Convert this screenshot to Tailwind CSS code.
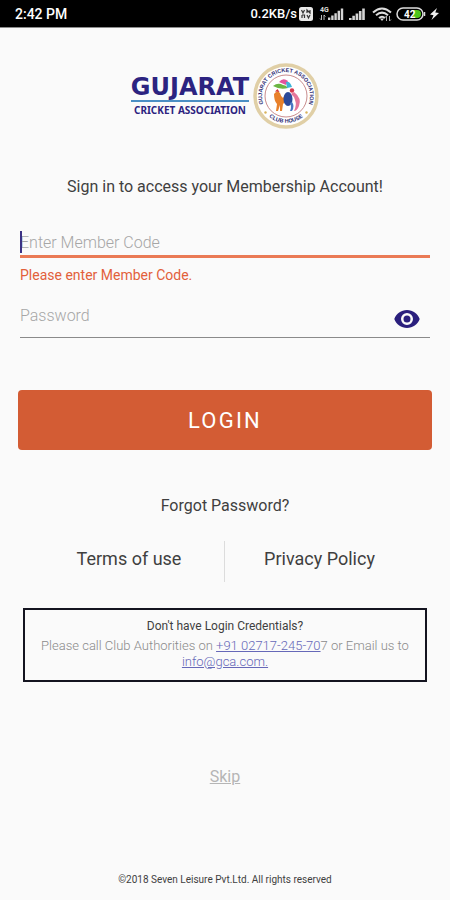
<!doctype html>
<html lang="en">
  <head>
    <meta charset="UTF-8" />
    <meta name="viewport" content="width=device-width, initial-scale=1.0" />
    <title>Gujarat Cricket Association - Login</title>
    <script src="https://cdn.jsdelivr.net/npm/@tailwindcss/browser@4"></script>
  </head>
  <body
    class="flex min-h-screen flex-col bg-[#fafafa] font-['Roboto',sans-serif] text-[#3f3f3f]"
  >
    <!-- Status bar -->
    <div
      class="flex h-7 items-center justify-between border-b border-[#8c8c8c] bg-black pr-[11px] pl-[15px] text-white"
    >
      <span class="text-sm font-medium">2:42 PM</span>
      <div class="flex items-center">
        <span class="text-[13px] font-medium">0.2KB/s</span>
        <svg class="ml-0.5 h-[14px] w-[14px]" viewBox="0 0 14 14">
          <rect width="14" height="14" rx="2.5" fill="#e8e8e8" />
          <path
            d="M2.5 3l1.5 3L5.500 3M8 6V3l3 3V3M3 8v3M3 8h2.500v3M8 8l1.500 3L11 8"
            fill="none"
            stroke="#333"
            stroke-width="1.200"
          />
        </svg>
        <svg class="ml-1.5 h-4 w-[25px]" viewBox="0 0 25 16">
          <text
            x="1"
            y="6"
            font-family="Roboto"
            font-size="7"
            font-weight="700"
            fill="#ddd"
          >4G</text>
          <path
            d="M2.500 9v5M1 12.500L2.500 14M5 14V9M5 9l1.500 1.500"
            stroke="#bbb"
            fill="none"
          />
          <path
            d="M9 11.500h2.400V14H9zM12.200 9.500h2.400V14h-2.400zM15.400 7.200h2.400V14h-2.400zM18.600 4.800H21V14h-2.400zM21.800 2.500h2.400V14h-2.400z"
            fill="#d5d5d5"
          />
        </svg>
        <svg class="ml-1 h-4 w-[18px]" viewBox="0 0 18 16">
          <path
            d="M1 12h2.600v2H1zM4.300 9.800h2.600V14H4.300zM7.600 7.400h2.600V14H7.600zM10.900 5h2.600v9h-2.600zM14.200 2.500h2.600V14h-2.600z"
            fill="#d5d5d5"
          />
        </svg>
        <svg class="ml-1.5 h-4 w-5" viewBox="0 0 20 16">
          <g fill="none" stroke="#ddd" stroke-width="2">
            <path d="M1 6.500Q10-1.500 19 6.500" />
            <path d="M4 9.200Q10 4 16 9.200" />
            <path d="M7 12q3-2.500 6 0" />
          </g>
          <path d="M8 12.500h4l-2 2.500z" fill="#ddd" />
          <path
            d="M14.500 15v-5M13 11.500l1.500-1.500M17.500 10v5l1.500-1.500"
            stroke="#aaa"
            fill="none"
          />
        </svg>
        <svg class="ml-1 h-4 w-[30px]" viewBox="0 0 30 16">
          <rect
            x="1"
            y="2"
            width="26"
            height="12"
            rx="6"
            fill="none"
            stroke="#ddd"
            stroke-width="1.500"
          />
          <path d="M17 4h4a4 4 0 0 1 0 8h-4z" fill="#4ec51c" />
          <path d="M28.500 6v4" stroke="#ddd" stroke-width="1.500" />
          <text
            x="8"
            y="11.500"
            font-family="Roboto"
            font-size="10"
            font-weight="700"
            fill="#fff"
          >42</text>
        </svg>
        <svg class="ml-1 h-3 w-[9px]" viewBox="0 0 9 12">
          <path d="M7 0L0 6.500l3.500.7L1.500 12 9 5 5.300 4.400z" fill="#eee" />
        </svg>
      </div>
    </div>

    <main class="flex grow flex-col">
      <!-- Logo -->
      <header class="mt-[35px] flex items-center justify-center gap-1">
        <div class="flex flex-col text-[#2c2380]">
          <span
            class="border-b-2 border-[#4b8fc4] font-['DejaVu_Sans',sans-serif] text-2xl leading-[26px] font-bold"
            >GUJARAT</span
          >
          <span
            class="text-center font-['Noto_Sans',sans-serif] text-[10px] leading-4 font-bold"
            >CRICKET ASSOCIATION</span
          >
        </div>
        <svg class="h-[66px] w-[66px]" viewBox="0 0 66 66">
          <defs>
            <path id="ringTop" d="M12.200 45A24 24 0 1 1 53.800 45" />
            <path id="ringBottom" d="M14 52A27 27 0 0 0 52 52" />
          </defs>
          <circle
            cx="33"
            cy="33"
            r="31"
            fill="#fff"
            stroke="#e0cfa6"
            stroke-width="3.500"
          />
          <circle
            cx="33"
            cy="33"
            r="21"
            fill="#fff"
            stroke="#c98c8c"
            stroke-width="1"
          />
          <g
            font-family="Liberation Sans"
            font-weight="700"
            fill="#2c2a72"
            text-anchor="middle"
          >
            <text font-size="5.500">
              <textPath href="#ringTop" startOffset="50%">GUJARAT CRICKET ASSOCIATION</textPath>
            </text>
            <text font-size="5.500">
              <textPath href="#ringBottom" startOffset="50%">CLUB HOUSE</textPath>
            </text>
          </g>
          <circle cx="12.500" cy="49.500" r="1.200" fill="#d9b45c" />
          <circle cx="53.500" cy="49.500" r="1.200" fill="#d9b45c" />
          <path d="M20 23q5-4 10-1 3 0 5 3-8 2-15-2z" fill="#6cb543" />
          <path d="M26 19q4-5 9-1l-2 4z" fill="#e3549c" />
          <path d="M33 19q4-1 6 5l-5 1z" fill="#3db5d8" />
          <path
            d="M21 31q3-4 6-1 1 4 3 5 2-4 3-3 0 7-3 9l-1 7h-2v-6l-2 6h-2l1-7q-3-3-3-10z"
            fill="#e8812b"
          />
          <path d="M22 28.500l2.500-2.500 2 3z" fill="#d63a2f" />
          <ellipse cx="35" cy="36" rx="4.500" ry="7" fill="#2c4a9a" />
          <circle cx="39" cy="27.500" r="2.200" fill="#d63a4f" />
          <path d="M41 29q8 6 5 14-2 5-5 5 3-6 1-11-1-4-4-6z" fill="#e5779b" />
          <path d="M39 39q3 4 0 9h-2q2-4 0-8z" fill="#4a79c4" />
        </svg>
      </header>

      <h1 class="mt-[46px] text-center text-base leading-6">
        Sign in to access your Membership Account!
      </h1>

      <form class="mt-[30px] flex flex-col">
        <div class="relative mx-5">
          <label for="memberCode" class="sr-only">Member Code</label>
          <input
            type="text"
            id="memberCode"
            name="memberCode"
            placeholder="Enter Member Code"
            aria-describedby="memberCodeError"
            class="block h-[29px] w-full border-b-[3px] border-[#ea7a55] text-base font-light placeholder:text-[#a6a6a6] focus:outline-none"
          />
          <!-- Text cursor -->
          <span
            class="absolute top-0.5 left-0 h-[22px] w-0.5 bg-[#3b3285]"
          ></span>
        </div>
        <p
          id="memberCodeError"
          class="mx-5 mt-[7px] text-sm leading-5 text-[#e2603a]"
        >
          Please enter Member Code.
        </p>

        <div
          class="mx-5 mt-4 flex h-[37px] items-center border-b border-[#8a8a8a] pr-2.5"
        >
          <label for="password" class="sr-only">Password</label>
          <input
            type="password"
            id="password"
            name="password"
            placeholder="Password"
            class="h-full grow pb-2 text-base font-light placeholder:text-[#a6a6a6] focus:outline-none"
          />
          <button type="button" aria-label="Show password">
            <svg class="h-[18px] w-[26px]" viewBox="0 0 26 18">
              <path
                d="M13 0C7.200 0 2.300 3.700 0.300 9c2 5.300 6.900 9 12.700 9s10.700-3.700 12.700-9C23.700 3.700 18.800 0 13 0zm0 15a6 6 0 1 1 0-12 6 6 0 0 1 0 12zm0-9.500a3.500 3.500 0 1 0 0 7 3.500 3.500 0 0 0 0-7z"
                fill="#2a1f7d"
              />
            </svg>
          </button>
        </div>

        <button
          type="submit"
          class="mx-[18px] mt-[52px] h-[60px] rounded bg-[#d35c34] text-[22px] tracking-widest text-white"
        >
          LOGIN
        </button>
      </form>

      <a href="#" class="mt-11 self-center text-base leading-6"
        >Forgot Password?</a
      >

      <nav
        class="mt-[23px] mr-9 ml-[34px] grid h-[41px] grid-cols-2 text-center text-lg leading-9"
      >
        <a href="#">Terms of use</a>
        <a href="#" class="border-l border-[#dcdcdc]">Privacy Policy</a>
      </nav>

      <section
        class="mx-[23px] mt-[26px] border-2 border-[#14141f] px-2 pt-2 pb-2.5 text-center leading-4"
      >
        <h2 class="mb-1 text-xs leading-4">Don't have Login Credentials?</h2>
        <p class="text-[13px] leading-4 font-light text-[#8a8a8a]">
          Please call Club Authorities on
          <a href="tel:+9102717245707" class="text-[#6668b8] underline"
            >+91 02717-245-70</a
          >7 or Email us to
          <a href="mailto:info@gca.com" class="text-[#6668b8] underline"
            >info@gca.com.</a
          >
        </p>
      </section>

      <a
        href="#"
        class="mt-[83px] self-center text-base leading-6 text-[#b5b5b5] underline"
        >Skip</a
      >

      <footer class="mt-auto pb-3 text-center text-[10px] leading-4">
        ©2018 Seven Leisure Pvt.Ltd. All rights reserved
      </footer>
    </main>
  </body>
</html>
